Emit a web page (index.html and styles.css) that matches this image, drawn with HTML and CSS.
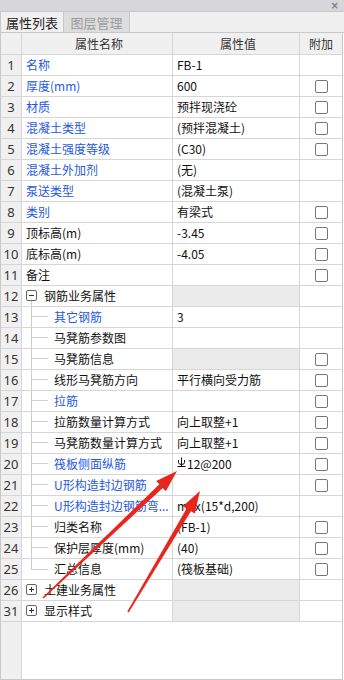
FILE: index.html
```html
<!DOCTYPE html>
<html lang="zh-CN">
<head>
<meta charset="utf-8">
<title>属性列表</title>
<link rel="stylesheet" href="styles.css">
</head>
<body>
<div class="panel">
  <div class="titlebar"><span class="close">×</span></div>
  <div class="tabs">
    <div class="tab active">属性列表</div>
    <div class="tab">图层管理</div>
  </div>
  <div class="table">
    <div class="row head">
      <div class="c num"></div>
      <div class="c name center">属性名称</div>
      <div class="c val center">属性值</div>
      <div class="c chk center">附加</div>
    </div>

    <div class="row"><div class="c num">1</div><div class="c name blue">名称</div><div class="c val">FB-1</div><div class="c chk"></div></div>
    <div class="row"><div class="c num">2</div><div class="c name blue">厚度(mm)</div><div class="c val">600</div><div class="c chk"><span class="box"></span></div></div>
    <div class="row"><div class="c num">3</div><div class="c name blue">材质</div><div class="c val">预拌现浇砼</div><div class="c chk"><span class="box"></span></div></div>
    <div class="row"><div class="c num">4</div><div class="c name blue">混凝土类型</div><div class="c val">(预拌混凝土)</div><div class="c chk"><span class="box"></span></div></div>
    <div class="row"><div class="c num">5</div><div class="c name blue">混凝土强度等级</div><div class="c val">(C30)</div><div class="c chk"><span class="box"></span></div></div>
    <div class="row"><div class="c num">6</div><div class="c name blue">混凝土外加剂</div><div class="c val">(无)</div><div class="c chk"></div></div>
    <div class="row"><div class="c num">7</div><div class="c name blue">泵送类型</div><div class="c val">(混凝土泵)</div><div class="c chk"></div></div>
    <div class="row"><div class="c num">8</div><div class="c name blue">类别</div><div class="c val">有梁式</div><div class="c chk"><span class="box"></span></div></div>
    <div class="row"><div class="c num">9</div><div class="c name">顶标高(m)</div><div class="c val">-3.45</div><div class="c chk"><span class="box"></span></div></div>
    <div class="row"><div class="c num">10</div><div class="c name">底标高(m)</div><div class="c val">-4.05</div><div class="c chk"><span class="box"></span></div></div>
    <div class="row"><div class="c num">11</div><div class="c name">备注</div><div class="c val"></div><div class="c chk"><span class="box"></span></div></div>

    <div class="row"><div class="c num">12</div><div class="c name group"><span class="toggle open"><span class="pm"><svg width="9" height="9" viewBox="0 0 9 9"><path d="M2 4.5H7" stroke="#333" stroke-width="1"/></svg></span><span class="stem"></span></span><span class="gtext">钢筋业务属性</span></div><div class="c val gray"></div><div class="c chk"></div></div>

    <div class="row"><div class="c num">13</div><div class="c name child"><span class="branch"><span class="tick"></span></span><span class="blue">其它钢筋</span></div><div class="c val">3</div><div class="c chk"></div></div>
    <div class="row"><div class="c num">14</div><div class="c name child"><span class="branch"><span class="tick"></span></span><span>马凳筋参数图</span></div><div class="c val"></div><div class="c chk"></div></div>
    <div class="row"><div class="c num">15</div><div class="c name child"><span class="branch"><span class="tick"></span></span><span>马凳筋信息</span></div><div class="c val gray"></div><div class="c chk"><span class="box"></span></div></div>
    <div class="row"><div class="c num">16</div><div class="c name child"><span class="branch"><span class="tick"></span></span><span>线形马凳筋方向</span></div><div class="c val">平行横向受力筋</div><div class="c chk"><span class="box"></span></div></div>
    <div class="row"><div class="c num">17</div><div class="c name child"><span class="branch"><span class="tick"></span></span><span class="blue">拉筋</span></div><div class="c val"></div><div class="c chk"><span class="box"></span></div></div>
    <div class="row"><div class="c num">18</div><div class="c name child"><span class="branch"><span class="tick"></span></span><span>拉筋数量计算方式</span></div><div class="c val">向上取整+1</div><div class="c chk"><span class="box"></span></div></div>
    <div class="row"><div class="c num">19</div><div class="c name child"><span class="branch"><span class="tick"></span></span><span>马凳筋数量计算方式</span></div><div class="c val">向上取整+1</div><div class="c chk"><span class="box"></span></div></div>
    <div class="row"><div class="c num">20</div><div class="c name child"><span class="branch"><span class="tick"></span></span><span class="blue">筏板侧面纵筋</span></div><div class="c val"><svg class="rebar" width="9" height="11" viewBox="0 0 9 11"><path d="M4.5 0.5V9.5M1.5 3V5.5Q1.5 7.5 4.5 7.5Q7.5 7.5 7.5 5.5V3M0.5 9.5H8.5" fill="none" stroke="#111" stroke-width="1"/></svg>12@200</div><div class="c chk"><span class="box"></span></div></div>
    <div class="row"><div class="c num">21</div><div class="c name child"><span class="branch"><span class="tick"></span></span><span class="blue">U形构造封边钢筋</span></div><div class="c val"></div><div class="c chk"><span class="box"></span></div></div>
    <div class="row"><div class="c num">22</div><div class="c name child"><span class="branch"><span class="tick"></span></span><span class="blue">U形构造封边钢筋弯...</span></div><div class="c val">max(15*d,200)</div><div class="c chk"></div></div>
    <div class="row"><div class="c num">23</div><div class="c name child"><span class="branch"><span class="tick"></span></span><span>归类名称</span></div><div class="c val">(FB-1)</div><div class="c chk"><span class="box"></span></div></div>
    <div class="row"><div class="c num">24</div><div class="c name child"><span class="branch"><span class="tick"></span></span><span>保护层厚度(mm)</span></div><div class="c val">(40)</div><div class="c chk"><span class="box"></span></div></div>
    <div class="row"><div class="c num">25</div><div class="c name child"><span class="branch last"><span class="tick"></span></span><span>汇总信息</span></div><div class="c val">(筏板基础)</div><div class="c chk"><span class="box"></span></div></div>

    <div class="row"><div class="c num">26</div><div class="c name group"><span class="toggle"><span class="pm"><svg width="9" height="9" viewBox="0 0 9 9"><path d="M2 4.5H7M4.5 2V7" stroke="#333" stroke-width="1"/></svg></span></span><span class="gtext">土建业务属性</span></div><div class="c val gray"></div><div class="c chk"></div></div>
    <div class="row"><div class="c num">31</div><div class="c name group"><span class="toggle"><span class="pm"><svg width="9" height="9" viewBox="0 0 9 9"><path d="M2 4.5H7M4.5 2V7" stroke="#333" stroke-width="1"/></svg></span></span><span class="gtext">显示样式</span></div><div class="c val gray"></div><div class="c chk"></div></div>

    <div class="filler"><div class="fnum"></div><div class="frest"></div></div>
  </div>

  <svg class="arrows" width="344" height="680" viewBox="0 0 344 680">
    <polygon fill="#e8261e" points="43.55,598.58 162.75,487.96 165.85,491.22 177,471 156.21,481.06 159.31,484.32 42.45,597.42"/>
    <polygon fill="#e8261e" points="128.69,612.41 190.91,511.18 194.77,513.48 200,491 182.75,506.32 186.61,508.62 127.31,611.59"/>
  </svg>
</div>
</body>
</html>
```

FILE: styles.css
```css
html, body {
  margin: 0;
  padding: 0;
  background: #fff;
}
body {
  font-family: "Microsoft YaHei", "Noto Sans CJK SC", "Noto Sans", sans-serif;
  font-size: 12px;
  color: #111;
}
.panel {
  width: 344px;
  height: 680px;
  display: flex;
  flex-direction: column;
  position: relative;
  overflow: hidden;
}
.titlebar {
  height: 11px;
  background: #d6d6db;
  display: flex;
  justify-content: flex-end;
  align-items: center;
  padding-right: 5px;
  flex: none;
}
.close {
  font-family: "DejaVu Sans", sans-serif;
  font-size: 10px;
  line-height: 10px;
  color: #808080;
  font-weight: bold;
}
.tabs {
  height: 22px;
  flex: none;
  display: flex;
  background: #f0f0f0;
  border-top: 1px solid #c9c9cd;
  border-bottom: 1px solid #c8c8c8;
  box-sizing: border-box;
}
.tab {
  width: 66px;
  display: flex;
  align-items: center;
  justify-content: center;
  font-size: 13px;
  color: #9a9a9a;
  background: #dddddd;
  border-right: 1px solid #c8c8c8;
  box-sizing: border-box;
}
.tab.active {
  width: 64px;
  background: #f0f0f0;
  color: #222;
  border-left: 1px solid #c8c8c8;
}
.table {
  flex: 1;
  display: flex;
  flex-direction: column;
  border-left: 1px solid #c8c8c8;
  border-right: 1px solid #c8c8c8;
  margin-right: 1px;
}
.row {
  display: grid;
  grid-template-columns: 21px 151px 127px 1fr;
  height: 21px;
  flex: none;
}
.row.head {
  height: 22px;
  background: #f0f0f0;
  color: #333;
}
.c {
  box-sizing: border-box;
  border-right: 1px solid #d6d6d6;
  border-bottom: 1px solid #d6d6d6;
  display: flex;
  align-items: center;
  line-height: 20px;
  white-space: nowrap;
  overflow: hidden;
}
.c.chk {
  border-right: none;
  justify-content: center;
}
.center {
  justify-content: center;
}
.num {
  background: #f0f0f0;
  justify-content: center;
  color: #333;
  font-size: 13px;
  font-family: "Microsoft YaHei", "Noto Sans", "Noto Sans CJK SC", sans-serif;
}
.name {
  padding-left: 4px;
}
.val {
  padding-left: 4px;
}
.gray {
  background: #ebebeb;
}
.blue {
  color: #1f58e0;
}
.box {
  width: 11px;
  height: 11px;
  border: 1px solid #777;
  border-radius: 2px;
  background: #fff;
}
.group {
  padding-left: 4px;
  align-items: stretch;
}
.toggle {
  width: 11px;
  display: flex;
  flex-direction: column;
  align-items: center;
  padding-top: 4px;
  box-sizing: border-box;
}
.pm {
  width: 11px;
  height: 11px;
  box-sizing: border-box;
  border: 1px solid #666;
  border-radius: 2px;
  background: #fff;
  display: flex;
  flex: none;
}
.pm svg {
  display: block;
}
.stem {
  flex: 1;
  width: 1px;
  background: #cccccc;
  margin-bottom: -1px;
}
.gtext {
  margin-left: 7px;
  display: flex;
  align-items: center;
}
.child {
  padding-left: 9px;
  align-items: stretch;
}
.branch {
  width: 23px;
  flex: none;
  border-left: 1px solid #cccccc;
  margin-bottom: -1px;
  box-sizing: border-box;
}
.branch.last {
  border-left: none;
  margin-bottom: 0;
}
.tick {
  display: block;
  width: 16px;
  height: 10px;
  border-bottom: 1px solid #d0d0d0;
  box-sizing: border-box;
}
.branch.last .tick {
  border-left: 1px solid #cccccc;
  width: 17px;
  height: 11px;
}
.child > span:last-child {
  display: flex;
  align-items: center;
}
.rebar {
  margin-right: 1px;
  margin-top: -3px;
}
.filler {
  flex: 1;
  display: grid;
  grid-template-columns: 21px 1fr;
  border-bottom: 1px solid #c8c8c8;
}
.fnum {
  background: #f0f0f0;
  border-right: 1px solid #d6d6d6;
}
.arrows {
  position: absolute;
  left: 0;
  top: 0;
  pointer-events: none;
}
```
